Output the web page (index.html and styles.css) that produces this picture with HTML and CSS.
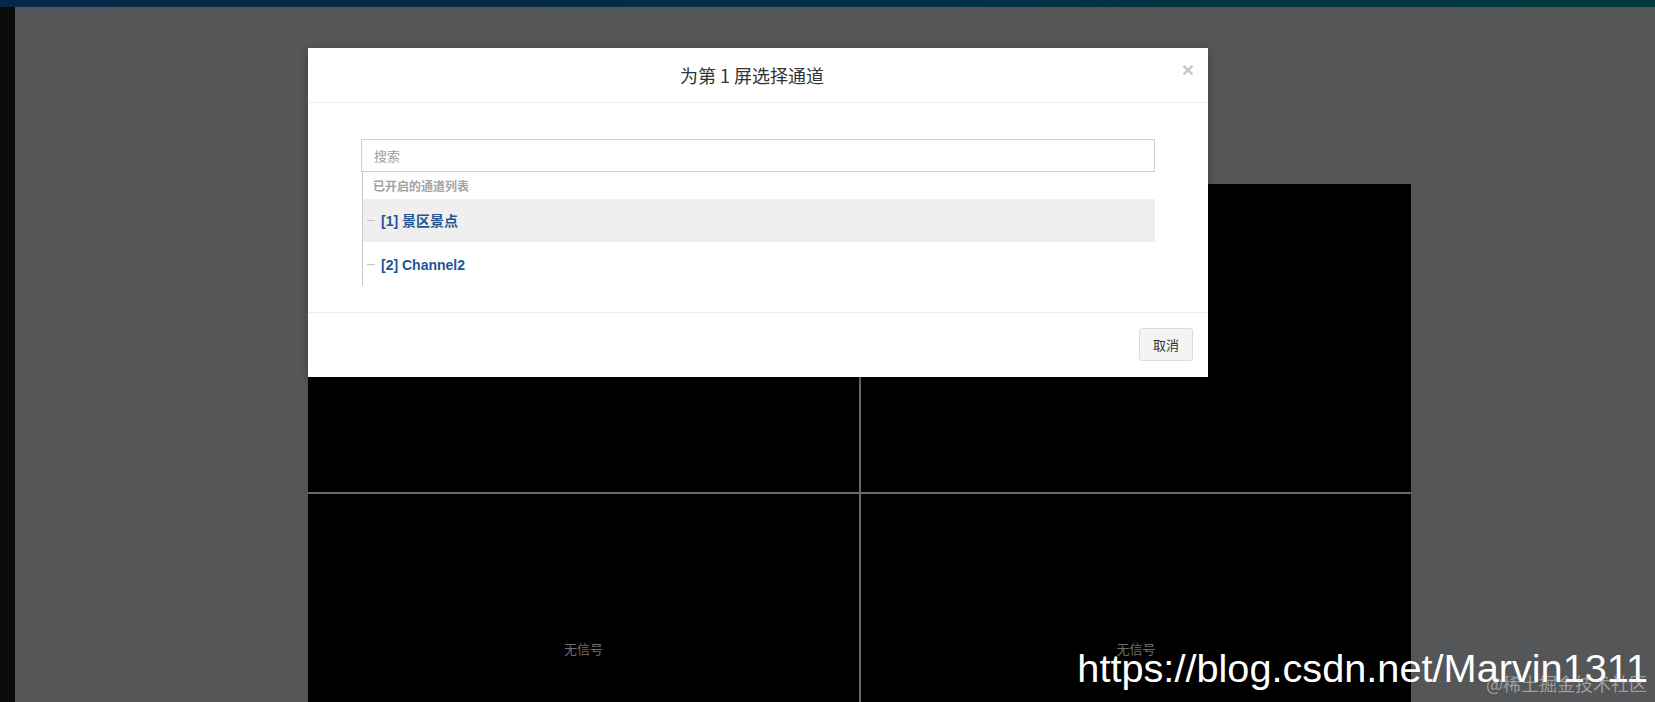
FILE: index.html
```html
<!DOCTYPE html>
<html lang="zh-CN">
<head>
<meta charset="utf-8">
<title>为第 1 屏选择通道</title>
<link rel="stylesheet" href="styles.css">
</head>
<body>
  <div class="topbar"></div>
  <div class="page">
    <aside class="side"></aside>
    <main class="main">
      <div class="grid">
        <div class="cell"><span class="nosignal">无信号</span></div>
        <div class="cell"><span class="nosignal">无信号</span></div>
        <div class="cell"><span class="nosignal">无信号</span></div>
        <div class="cell"><span class="nosignal">无信号</span></div>
      </div>
    </main>
  </div>

  <div class="modal">
    <div class="modal-header">
      <h4 class="modal-title">为第 1 屏选择通道</h4>
      <span class="close">×</span>
    </div>
    <div class="modal-body">
      <input class="search" type="text" placeholder="搜索">
      <div class="channels">
        <div class="channels-label">已开启的通道列表</div>
        <div class="channel channel-active"><span class="dash"></span><span class="channel-name">[1] 景区景点</span></div>
        <div class="channel channel-last"><span class="dash"></span><span class="channel-name">[2] Channel2</span></div>
      </div>
    </div>
    <div class="modal-footer">
      <button class="btn" type="button">取消</button>
    </div>
  </div>

  <div class="watermark">https://blog.csdn.net/Marvin1311</div>
  <div class="watermark-small">@稀土掘金技术社区</div>
</body>
</html>
```

FILE: styles.css
```css
html, body {
  margin: 0;
  padding: 0;
}
body {
  width: 1655px;
  height: 702px;
  overflow: hidden;
  background: #555657;
  font-family: "Noto Sans CJK SC", "Liberation Sans", sans-serif;
  position: relative;
}
.topbar {
  height: 7px;
  background: linear-gradient(90deg, #05284a 0%, #032e48 50%, #013a3c 100%);
}
.page {
  display: flex;
  height: 695px;
  overflow: hidden;
}
.side {
  width: 15px;
  flex: none;
  background: #0b0b0c;
}
.main {
  flex: 1;
  background: #555657;
  padding: 177px 0 0 293px;
  overflow: hidden;
}
.grid {
  width: 1103px;
  display: grid;
  grid-template-columns: 551px 550px;
  grid-template-rows: 308px 309px;
  gap: 2px;
  background: #6a6a6a;
}
.cell {
  background: #000;
  display: flex;
  align-items: center;
  justify-content: center;
}
.nosignal {
  color: #6f6f6f;
  font-size: 13px;
}

/* modal */
.modal {
  position: absolute;
  left: 308px;
  top: 48px;
  width: 900px;
  background: #fff;
  box-shadow: 0 3px 9px rgba(0, 0, 0, 0.25);
}
.modal-header {
  position: relative;
  padding: 15px 27px 15px 15px;
  border-bottom: 1px solid #ececec;
}
.modal-title {
  margin: 0;
  text-align: center;
  font-size: 18px;
  line-height: 24px;
  font-weight: 400;
  color: #333;
}
.close {
  position: absolute;
  right: 14px;
  top: 10px;
  font-family: "Liberation Sans", sans-serif;
  font-size: 21px;
  font-weight: 700;
  line-height: 24px;
  color: #c8c8c8;
}
.modal-body {
  padding: 36px 53px 26px;
}
.search {
  display: block;
  box-sizing: border-box;
  width: 100%;
  height: 33px;
  margin: 0;
  padding: 0 12px;
  border: 1px solid #cfcfcf;
  border-radius: 0;
  font-family: "Noto Sans CJK SC", "Liberation Sans", sans-serif;
  font-size: 13px;
  color: #555;
  outline: none;
}
.search::placeholder {
  color: #a0a0a0;
}
.channels {
  margin-left: 1px;
  border-left: 1px solid #c8c8c8;
}
.channels-label {
  height: 27px;
  line-height: 27px;
  padding-left: 10px;
  font-size: 12px;
  font-weight: 700;
  color: #a3a3a3;
}
.channel {
  display: flex;
  align-items: center;
  height: 43px;
  font-family: "Liberation Sans", "Noto Sans CJK SC", sans-serif;
  font-size: 14px;
  font-weight: 700;
  color: #1f5595;
}
.channel-active {
  padding-bottom: 1px;
  height: 42px;
  background: #efefef;
}
.channel-last {
  height: 44px;
  padding-top: 1px;
  box-sizing: border-box;
}
.dash {
  width: 8px;
  height: 1px;
  margin: 0 6px 0 4px;
  background: #c4c4c4;
}
.modal-footer {
  display: flex;
  justify-content: flex-end;
  padding: 15px 15px 16px;
  border-top: 1px solid #ececec;
}
.btn {
  box-sizing: border-box;
  height: 33px;
  width: 54px;
  padding: 0;
  border: 1px solid #dcdcdc;
  border-radius: 3px;
  background: #f4f4f4;
  font-family: "Noto Sans CJK SC", "Liberation Sans", sans-serif;
  font-size: 13px;
  color: #333;
}

/* watermarks */
.watermark {
  position: absolute;
  right: 7px;
  top: 648px;
  font-family: "Liberation Sans", sans-serif;
  font-size: 39.7px;
  line-height: 40px;
  color: #fff;
  white-space: nowrap;
}
.watermark-small {
  position: absolute;
  right: 8px;
  top: 671px;
  font-size: 18px;
  line-height: 24px;
  color: rgba(220, 220, 220, 0.55);
  white-space: nowrap;
}
```
